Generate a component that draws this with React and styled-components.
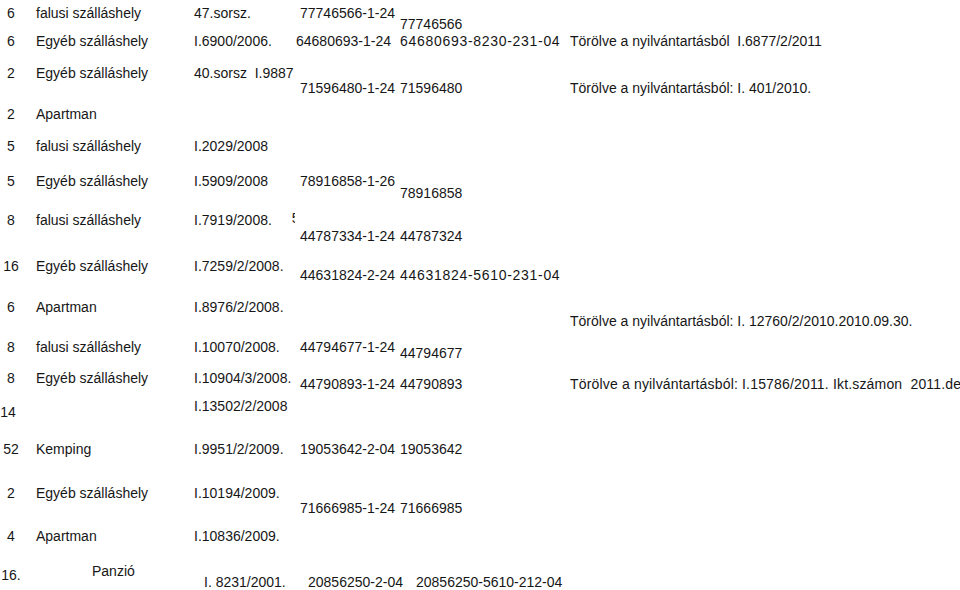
import styled, { createGlobalStyle } from "styled-components";

const GlobalStyle = createGlobalStyle`
  html, body {
    margin: 0;
    padding: 0;
    background: #ffffff;
  }
`;

const Page = styled.div`
  width: 960px;
  height: 590px;
  overflow: hidden;
  padding-top: 5px;
  box-sizing: border-box;
  font-family: "Liberation Sans", Arial, sans-serif;
  font-size: 14px;
  line-height: 16px;
  color: #161616;
  display: flex;
  flex-direction: column;
`;

const Row = styled.div`
  display: grid;
  grid-template-columns: 36px 158px 106px 100px 170px 1fr;
  height: ${(p) => p.$h}px;
  flex-shrink: 0;
`;

const Cell = styled.div`
  white-space: pre;
  margin-top: ${(p) => p.$dy || 0}px;
  margin-left: ${(p) => p.$dx || 0}px;
  letter-spacing: ${(p) => p.$ls || 0}px;
  display: flex;
  align-items: flex-start;
`;

const NumCell = styled(Cell)`
  width: 22px;
  justify-content: center;
`;

const Stub = styled.span`
  display: inline-block;
  width: 3px;
  overflow: hidden;
  margin-left: 20px;
  margin-top: -2px;
`;

const rows = [
  {
    h: 28,
    cells: [
      { t: "6" },
      { t: "falusi szálláshely" },
      { t: "47.sorsz." },
      { t: "77746566-1-24" },
      { t: "77746566", dy: 11 },
      { t: "" },
    ],
  },
  {
    h: 32,
    cells: [
      { t: "6" },
      { t: "Egyéb szálláshely" },
      { t: "I.6900/2006." },
      { t: "64680693-1-24", dx: -4 },
      { t: "64680693-8230-231-04", ls: 0.7 },
      { t: "Törölve a nyilvántartásból  I.6877/2/2011" },
    ],
  },
  {
    h: 41,
    cells: [
      { t: "2" },
      { t: "Egyéb szálláshely" },
      { t: "40.sorsz  I.9887" },
      { t: "71596480-1-24", dy: 15 },
      { t: "71596480", dy: 15 },
      { t: "Törölve a nyilvántartásból: I. 401/2010.", dy: 15 },
    ],
  },
  {
    h: 32,
    cells: [{ t: "2" }, { t: "Apartman" }, { t: "" }, { t: "" }, { t: "" }, { t: "" }],
  },
  {
    h: 35,
    cells: [
      { t: "5" },
      { t: "falusi szálláshely" },
      { t: "I.2029/2008" },
      { t: "" },
      { t: "" },
      { t: "" },
    ],
  },
  {
    h: 39,
    cells: [
      { t: "5" },
      { t: "Egyéb szálláshely" },
      { t: "I.5909/2008" },
      { t: "78916858-1-26" },
      { t: "78916858", dy: 12 },
      { t: "" },
    ],
  },
  {
    h: 46,
    cells: [
      { t: "8" },
      { t: "falusi szálláshely" },
      { t: "I.7919/2008.", stub: "5" },
      { t: "44787334-1-24", dy: 16 },
      { t: "44787324", dy: 16 },
      { t: "" },
    ],
  },
  {
    h: 41,
    cells: [
      { t: "16" },
      { t: "Egyéb szálláshely" },
      { t: "I.7259/2/2008." },
      { t: "44631824-2-24", dy: 9 },
      { t: "44631824-5610-231-04", dy: 9, ls: 0.7 },
      { t: "" },
    ],
  },
  {
    h: 40,
    cells: [
      { t: "6" },
      { t: "Apartman" },
      { t: "I.8976/2/2008." },
      { t: "" },
      { t: "" },
      { t: "Törölve a nyilvántartásból: I. 12760/2/2010.2010.09.30.", dy: 14 },
    ],
  },
  {
    h: 31,
    cells: [
      { t: "8" },
      { t: "falusi szálláshely" },
      { t: "I.10070/2008." },
      { t: "44794677-1-24" },
      { t: "44794677", dy: 6 },
      { t: "" },
    ],
  },
  {
    h: 28,
    cells: [
      { t: "8" },
      { t: "Egyéb szálláshely" },
      { t: "I.10904/3/2008." },
      { t: "44790893-1-24", dy: 6 },
      { t: "44790893", dy: 6 },
      {
        t: "Törölve a nyilvántartásból: I.15786/2011. Ikt.számon  2011.de",
        dy: 6,
        ls: 0.17,
      },
    ],
  },
  {
    h: 43,
    cells: [
      { t: "14", dy: 6, dx: -3 },
      { t: "" },
      { t: "I.13502/2/2008" },
      { t: "" },
      { t: "" },
      { t: "" },
    ],
  },
  {
    h: 44,
    cells: [
      { t: "52" },
      { t: "Kemping" },
      { t: "I.9951/2/2009." },
      { t: "19053642-2-04" },
      { t: "19053642" },
      { t: "" },
    ],
  },
  {
    h: 43,
    cells: [
      { t: "2" },
      { t: "Egyéb szálláshely" },
      { t: "I.10194/2009." },
      { t: "71666985-1-24", dy: 15 },
      { t: "71666985", dy: 15 },
      { t: "" },
    ],
  },
  {
    h: 35,
    cells: [
      { t: "4" },
      { t: "Apartman" },
      { t: "I.10836/2009." },
      { t: "" },
      { t: "" },
      { t: "" },
    ],
  },
  {
    h: 27,
    cells: [
      { t: "16.", dy: 4 },
      { t: "Panzió", dx: 56 },
      { t: "I. 8231/2001.", dy: 11, dx: 10 },
      { t: "20856250-2-04", dy: 11, dx: 8 },
      { t: "20856250-5610-212-04", dy: 11, dx: 16 },
      { t: "" },
    ],
  },
];

const App = () => {
  return (
    <>
      <GlobalStyle />
      <Page>
        {rows.map((row, i) => (
          <Row key={i} $h={row.h}>
            {row.cells.map((c, j) => {
              const C = j === 0 ? NumCell : Cell;
              return (
                <C key={j} $dy={c.dy} $dx={c.dx} $ls={c.ls}>
                  {c.t}
                  {c.stub && <Stub>{c.stub}</Stub>}
                </C>
              );
            })}
          </Row>
        ))}
      </Page>
    </>
  );
};

export default App;
